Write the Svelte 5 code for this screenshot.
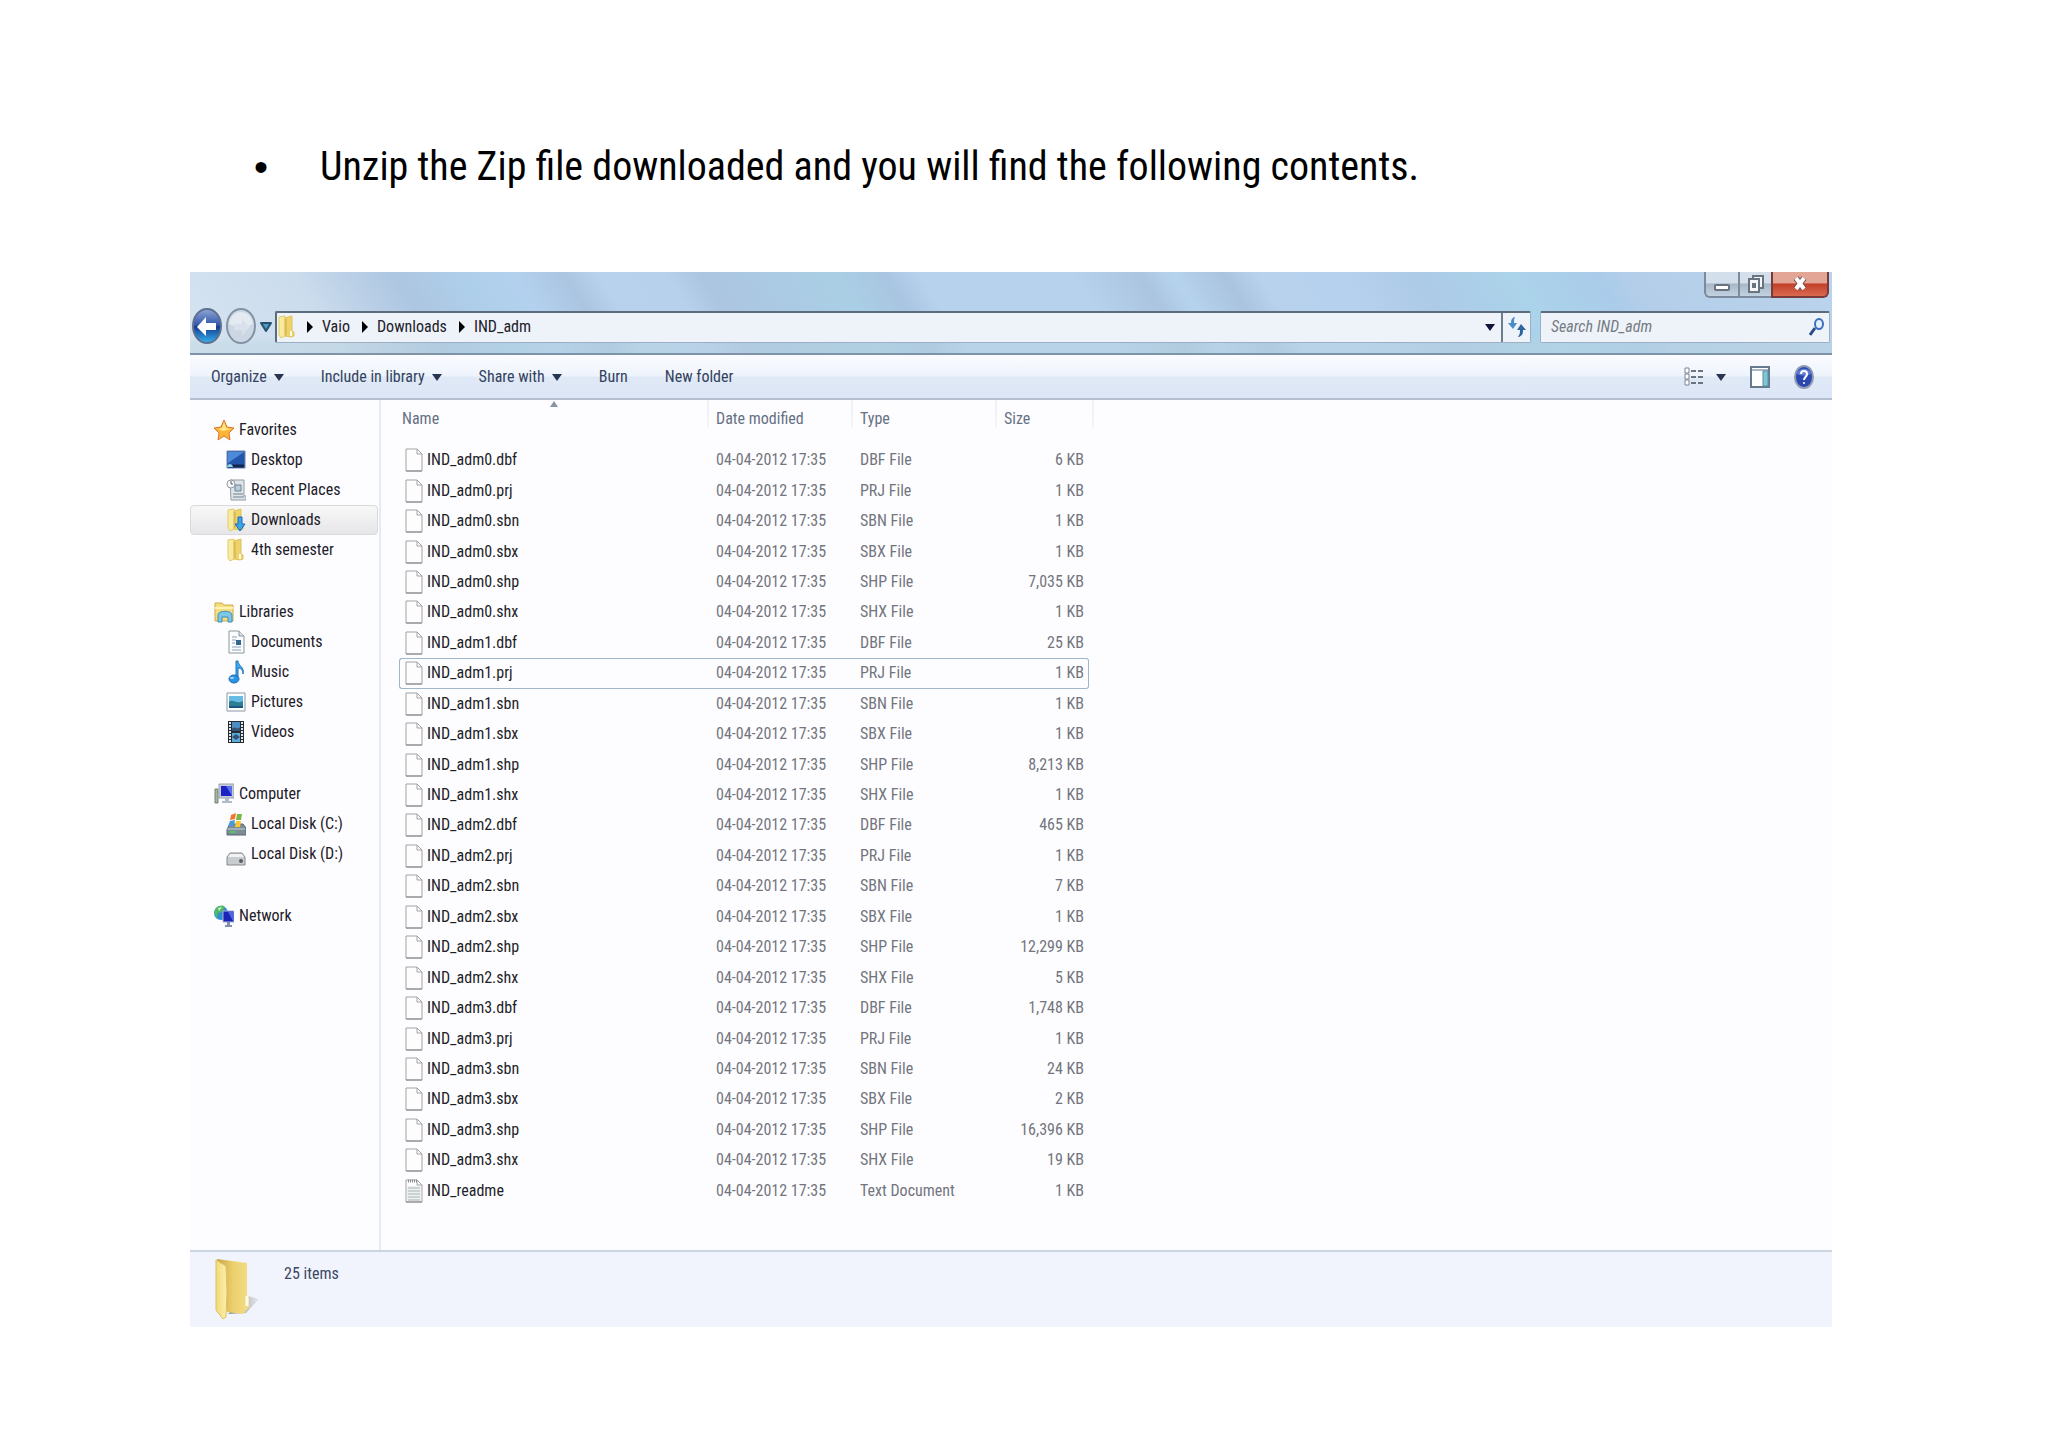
<script>
  const places = [
    {
      name: "Favorites",
      icon: "star",
      items: [
        { name: "Desktop", icon: "desktop" },
        { name: "Recent Places", icon: "recent" },
        { name: "Downloads", icon: "downloads" },
        { name: "4th semester", icon: "folder" },
      ],
    },
    {
      name: "Libraries",
      icon: "libraries",
      items: [
        { name: "Documents", icon: "document" },
        { name: "Music", icon: "music" },
        { name: "Pictures", icon: "pictures" },
        { name: "Videos", icon: "videos" },
      ],
    },
    {
      name: "Computer",
      icon: "computer",
      items: [
        { name: "Local Disk (C:)", icon: "diskc" },
        { name: "Local Disk (D:)", icon: "diskd" },
      ],
    },
    { name: "Network", icon: "network", items: [] },
  ];

  const kinds = ["dbf", "prj", "sbn", "sbx", "shp", "shx"];
  const sizes = [
    ["6", "1", "1", "1", "7,035", "1"],
    ["25", "1", "1", "1", "8,213", "1"],
    ["465", "1", "7", "1", "12,299", "5"],
    ["1,748", "1", "24", "2", "16,396", "19"],
  ];

  const files = sizes.flatMap((row, i) =>
    row.map((size, k) => ({
      name: `IND_adm${i}.${kinds[k]}`,
      type: `${kinds[k].toUpperCase()} File`,
      size,
    }))
  );
  files.push({ name: "IND_readme", type: "Text Document", size: "1", text: true });

  const path = ["Vaio", "Downloads", "IND_adm"];
  const commands = [
    { name: "Organize", menu: true },
    { name: "Include in library", menu: true },
    { name: "Share with", menu: true },
    { name: "Burn" },
    { name: "New folder" },
  ];

  let place = $state("Downloads");
  let selected = $state("IND_adm1.prj");
  let query = $state("");
</script>

{#snippet down()}
  <svg class="down" viewBox="0 0 10 8"><path d="M0 1h10L5 8z" fill="currentColor" /></svg>
{/snippet}

{#snippet folder()}
  <path d="M2 2 8 1v20l-4 2-2-3z" fill="#f8ea9e" stroke="#e2cb6c" />
  <path d="M8 3l7-2v15l2 1v4l-3 1-6-1z" fill="#eed36a" stroke="#dec25c" />
  <path d="M9 4v16" stroke="#cfae4a" />
  <path d="M14 16v5" stroke="#fffbe0" stroke-width="2" />
{/snippet}

{#snippet icon(name)}
  <svg class="icon" viewBox="0 0 20 24" fill="none">
    {#if name === "star"}
      <path d="M10 2l3 7 7 1-5 5 1 7-6-4-6 4 1-7-5-5 7-1z" fill="#fbb436" stroke="#d9772a" />
      <path d="M10 4l2 6 5 1-8 2-5-2 4-1z" fill="#ffe78c" />
    {:else if name === "desktop"}
      <path d="M1 3h18v17H1z" fill="#2356a8" stroke="#6c87b3" />
      <path d="M2 4h16L2 15z" fill="#4d8bd8" />
      <path d="M2 18h16" stroke="#16254f" stroke-width="3" />
      <path d="M1 19c1-4 5-4 6 0z" fill="#8fd5e8" />
    {:else if name === "recent"}
      <path d="M4 2h14v16h2v4H5z" fill="#dfe4e8" stroke="#929ba3" />
      <path d="M9 7h6v6H9z" fill="#b8cbd8" stroke="#71838f" />
      <path d="M7 16h10M7 19h11" stroke="#71838f" />
      <circle cx="5" cy="6" r="4" fill="#f8fafb" stroke="#8f979d" />
      <path d="M5 3v3h2" stroke="#535d66" />
    {:else if name === "downloads"}
      {@render folder()}
      <path d="M12 9h4v7h3l-5 7-5-7h3z" fill="#3ba5e6" stroke="#1a68b5" />
    {:else if name === "folder"}
      {@render folder()}
    {:else if name === "libraries"}
      <path d="M1 3h7l2 2h9v16H1z" fill="#f5dd7d" stroke="#cfae4b" />
      <path d="M1 8h18" stroke="#fff3b8" stroke-width="2" />
      <path d="M4 22v-7c0-5 14-5 14 0v7h-4v-5H8v5z" fill="#7cc6e6" stroke="#3f8fbd" />
    {:else if name === "document"}
      <path d="M3 1h10l5 5v17H3z" fill="#fbfcfd" stroke="#8d979f" />
      <path d="M13 1v5h5" fill="#dbe1e6" stroke="#8d979f" />
      <path d="M6 7h5M6 10h4M6 13h3M6 17h9M6 20h9" stroke="#8ba3ba" />
      <path d="M10 10h5v5h-5z" fill="#33668f" />
    {:else if name === "music"}
      <path d="M10 17V1h2c0 5 7 6 5 13 0-4-2-6-5-6v10" fill="#3fa6ea" stroke="#2177bd" />
      <ellipse cx="8" cy="19" rx="5" ry="4" fill="#2c92e0" stroke="#1a69b3" />
      <ellipse cx="6" cy="18" rx="2" ry="1" fill="#a5dbf8" />
    {:else if name === "pictures"}
      <path d="M1 3h18v18H1z" fill="#fdfefe" stroke="#8a98a3" />
      <path d="M3 6h14v12H3z" fill="#68bbe5" />
      <path d="M3 12c4-4 7 3 14-1v7H3z" fill="#2d7e93" />
      <path d="M3 16h14v2H3z" fill="#1d5682" />
    {:else if name === "videos"}
      <path d="M2 1h16v22H2z" fill="#252b33" />
      <path d="M6 2h8v9H6z" fill="#4a8ec8" />
      <path d="M6 13h8v9H6z" fill="#5aaadc" />
      <path d="M6 9c3-4 5 2 8-2v4H6zM6 17l4-3 4 3-4 3z" fill="#385272" />
      <path d="M4 2v20M16 2v20" stroke="#e2e7ec" stroke-width="2" stroke-dasharray="2 1" />
    {:else if name === "computer"}
      <path d="M1 7h3v14H1z" fill="#a4b3a2" stroke="#748374" />
      <path d="M5 2h15v14H5z" fill="#c6cbd8" stroke="#9aa2b2" />
      <path d="M7 4h11v10H7z" fill="#1d22c4" />
      <path d="M12 4h6v10z" fill="#5a70e8" />
      <path d="M11 16h4v3h3v2H8v-2h3z" fill="#b3bac6" />
    {:else if name === "diskc"}
      <path d="M4 12h13l3 4v7H1v-6z" fill="#7d8d95" stroke="#59676f" />
      <path d="M1 17h18" stroke="#c5d2d8" />
      <path d="M4 20h6" stroke="#55c36a" stroke-width="2" />
      <path d="M5 3l5-2-1 6-5 1z" fill="#f0762f" />
      <path d="M11 2l5 0-1 6-5 0z" fill="#7cb944" />
      <path d="M4 9l5-1-1 6-6 0z" fill="#4a9adb" />
      <path d="M10 9h5l-1 6H9z" fill="#fbc735" />
    {:else if name === "diskd"}
      <path d="M4 11h12l3 4v8H1v-8z" fill="#c9cccf" stroke="#85898d" stroke-linejoin="round" />
      <path d="M4 12h12l2 3H2z" fill="#f1f2f3" />
      <circle cx="15" cy="19" r="2" fill="#595d62" />
    {:else if name === "network"}
      <circle cx="7" cy="9" r="7" fill="#2f8fd0" />
      <path d="M2 4c3-3 7-3 9-1L8 8l-4 1-1 5C0 11 0 6 2 4z" fill="#55b865" />
      <path d="M4 4l4-1-3 4z" fill="#d4f2dc" />
      <path d="M9 7h11v11H9z" fill="#1c24b8" stroke="#a6b4d8" />
      <path d="M14 8h5v9z" fill="#5067e0" />
      <path d="M13 18h3v3h2v2h-7v-2h2z" fill="#8790ab" />
    {/if}
  </svg>
{/snippet}

<main>
  <ul class="note">
    <li>Unzip the Zip file downloaded and you will find the following contents.</li>
  </ul>

  <section class="window">
    <header>
      <div class="caption">
        <button aria-label="Minimize">
          <svg width="16" height="18" viewBox="0 0 16 18">
            <rect x="1" y="10" width="14" height="5" rx="1" fill="#fff" stroke="#6a7480" stroke-width="2" />
          </svg>
        </button>
        <button aria-label="Restore">
          <svg width="16" height="18" viewBox="0 0 16 18" fill="#f4f6f8" stroke="#6a7480" stroke-width="2">
            <path d="M5 1h10v12H5z" />
            <path d="M1 4h10v13H1z" />
            <path d="M5 9h2v3H5z" />
          </svg>
        </button>
        <button class="close" aria-label="Close">
          <svg width="16" height="18" viewBox="0 0 16 18" fill="none">
            <path d="M4 3l8 11M12 3L4 14" stroke="#7b4a4a" stroke-width="6" />
            <path d="M4 3l8 11M12 3L4 14" stroke="#fff" stroke-width="4" />
          </svg>
        </button>
      </div>

      <div class="nav">
        <div class="history">
          <button class="back" aria-label="Back">
            <svg width="30" height="37" viewBox="0 0 30 37">
              <defs>
                <linearGradient id="orb" x2="0" y2="1">
                  <stop offset="0" stop-color="#8fa6d6" />
                  <stop offset=".48" stop-color="#3156ac" />
                  <stop offset=".52" stop-color="#123a92" />
                  <stop offset="1" stop-color="#38b4ef" />
                </linearGradient>
              </defs>
              <ellipse cx="15" cy="18" rx="14" ry="17" fill="url(#orb)" stroke="#60708e" stroke-width="2" />
              <path d="M5 19l9-10v6h10v7H14v6z" fill="#fff" />
            </svg>
          </button>
          <button class="forward" aria-label="Forward">
            <svg width="30" height="37" viewBox="0 0 30 37">
              <ellipse cx="15" cy="18" rx="14" ry="17" fill="#ccd7e4" stroke="#8492a4" stroke-width="2" />
              <path d="M3 16c2-16 22-16 24 0-8 4-16 4-24 0z" fill="#e3eaf2" />
              <path d="M24 19l-8-8v5H8v6h8v5z" fill="#d9e2ec" />
            </svg>
          </button>
          <button class="recent" aria-label="Recent pages">
            <svg width="12" height="10" viewBox="0 0 12 10">
              <path d="M1 1h10L6 9z" fill="#4d9ac4" stroke="#27506f" stroke-width="2" stroke-linejoin="round" />
            </svg>
          </button>
        </div>

        <div class="address">
          {@render icon("folder")}
          {#each path as part}
            <svg class="right" viewBox="0 0 6 12"><path d="M0 0l6 6-6 6z" /></svg>
            <button>{part}</button>
          {/each}
          <button class="previous" aria-label="Previous locations">{@render down()}</button>
          <button class="refresh" aria-label="Refresh">
            <svg width="18" height="20" viewBox="0 0 18 20">
              <path d="M6 0C3 2 3 4 3 6H0l5 6 4-6H6c0-3 0-4 1-6z" fill="#4a8cc9" />
              <path d="M11 20c4-2 4-4 4-7h3l-5-6-4 6h3c0 3 0 4-2 7z" fill="#2f659f" />
            </svg>
          </button>
        </div>

        <label class="search">
          <input type="text" placeholder="Search IND_adm" aria-label="Search IND_adm" bind:value={query} />
          <svg width="16" height="20" viewBox="0 0 16 20" fill="none">
            <path d="M1 18l5-7" stroke="#2a4a86" stroke-width="3" />
            <ellipse cx="10" cy="7" rx="4" ry="5" fill="#e6f0fb" stroke="#3c6fc0" stroke-width="2" />
          </svg>
        </label>
      </div>
    </header>

    <div class="toolbar">
      {#each commands as c}
        <button>{c.name}{#if c.menu}{@render down()}{/if}</button>
      {/each}
      <div class="views">
        <button class="view" aria-label="Change your view">
          <svg width="20" height="20" viewBox="0 0 20 20" fill="#fff" stroke="#7b8592">
            <path d="M1 1h4v5H1zM1 7h4v5H1zM1 13h4v5H1z" />
            <path d="M7 4h5M14 4h5M7 10h5M14 10h5M7 16h5M14 16h5" stroke="#6b7582" stroke-width="2" />
          </svg>
          {@render down()}
        </button>
        <button aria-label="Show the preview pane">
          <svg width="20" height="22" viewBox="0 0 20 22">
            <path d="M1 1h18v20H1z" fill="#fff" stroke="#67798d" stroke-width="2" />
            <path d="M2 4h16" stroke="#a9b8c9" stroke-width="2" />
            <path d="M13 5h5v15h-5z" fill="#7cc7d6" stroke="#5b8fa3" />
          </svg>
        </button>
        <button aria-label="Get help">
          <svg width="20" height="24" viewBox="0 0 20 24">
            <ellipse cx="10" cy="12" rx="9" ry="11" fill="#2a48b0" stroke="#8f9bb0" stroke-width="2" />
            <path d="M3 9c1-7 13-7 14 0-5 2-9 2-14 0z" fill="#5f7dd4" />
            <path d="M7 9c0-4 6-4 6 0 0 3-3 3-3 6" fill="none" stroke="#fff" stroke-width="2" />
            <circle cx="10" cy="18" r="1" fill="#fff" />
          </svg>
        </button>
      </div>
    </div>

    <div class="body">
      <nav>
        {#each places as group}
          <div class="group">
            <a href="#{group.name}">{@render icon(group.icon)}{group.name}</a>
            {#each group.items as item}
              <a
                href="#{item.name}"
                class="child"
                class:current={item.name === place}
                onclick={() => (place = item.name)}>{@render icon(item.icon)}{item.name}</a
              >
            {/each}
          </div>
        {/each}
      </nav>

      <div class="files">
        <table>
          <colgroup>
            <col class="c-name" />
            <col class="c-date" />
            <col class="c-type" />
            <col class="c-size" />
            <col class="c-end" />
          </colgroup>
          <thead>
            <tr>
              <th aria-sort="ascending">
                Name
                <svg class="sort" viewBox="0 0 8 6"><path d="M0 6l4-6 4 6z" fill="#8995a5" /></svg>
              </th>
              <th>Date modified</th>
              <th>Type</th>
              <th colspan="2">Size</th>
            </tr>
          </thead>
          <tbody>
            {#each files as file}
              <tr class:selected={file.name === selected} onclick={() => (selected = file.name)}>
                <td class="name">
                  <div>
                    <svg width="18" height="24" viewBox="0 0 18 24" fill="none">
                      <path d="M1 1h11l5 5v17H1z" fill="#fdfdfd" stroke="#a3a3a6" />
                      <path d="M12 1v5h5" stroke="#a3a3a6" />
                      <path d="M1 23h16" stroke="#85858a" />
                      {#if file.text}
                        <path d="M2 7h14v15H2z" fill="#eef1f1" />
                        <path d="M3 9h12M3 12h12M3 15h12M3 18h12M3 21h12" stroke="#a9b3b3" />
                        <path d="M3 2h9" stroke="#8a8f92" stroke-width="3" stroke-dasharray="1 1" />
                      {/if}
                    </svg>
                    {file.name}
                  </div>
                </td>
                <td>04-04-2012 17:35</td>
                <td>{file.type}</td>
                <td class="size">{file.size} KB</td>
                <td class="end"></td>
              </tr>
            {/each}
          </tbody>
        </table>
      </div>
    </div>

    <footer>
      <svg width="46" height="62" viewBox="0 0 46 62">
        <defs>
          <linearGradient id="flap">
            <stop offset="0" stop-color="#f2da78" />
            <stop offset="1" stop-color="#fbf0ae" />
          </linearGradient>
          <linearGradient id="inside">
            <stop offset="0" stop-color="#c9a548" />
            <stop offset=".5" stop-color="#ecd06c" />
            <stop offset="1" stop-color="#f3dd86" />
          </linearGradient>
          <linearGradient id="shade">
            <stop offset="0" stop-color="#8a8a8a" />
            <stop offset="1" stop-color="#e6e8ef" />
          </linearGradient>
        </defs>
        <path d="M14 56l20-18 11 3-13 14z" fill="url(#shade)" />
        <path d="M3 1l30 4v33l2 2v9l-6 7-16-2z" fill="url(#inside)" />
        <path d="M2 2l10 6 1 26-1 25-3 2-7-9z" fill="url(#flap)" stroke="#dcc066" />
        <path d="M33 38v10" stroke="#fffbe6" stroke-width="3" />
      </svg>
      <span>{files.length} items</span>
    </footer>
  </section>
</main>

<style>
  :global(body) {
    margin: 0;
    background: #fff;
  }
  main {
    padding: 136px 216px 120px 190px;
    font: 16px/24px "Roboto Condensed", "Open Sans", sans-serif;
    color: #1d2029;
  }
  button {
    display: flex;
    align-items: center;
    padding: 0;
    border: 0;
    background: none;
    font: inherit;
    color: inherit;
  }
  svg {
    flex: none;
  }
  .note {
    margin: 0 0 74px 64px;
    padding: 0;
    list-style: none;
    font-size: 40px;
    line-height: 62px;
    color: #000;
  }
  .note li {
    display: flex;
  }
  .note li::before {
    content: "•";
    width: 66px;
    font-family: "Liberation Sans", sans-serif;
  }

  header {
    border-bottom: 2px solid #7f93a8;
    background:
      linear-gradient(to bottom, transparent 80%, #b9d3dd66 90%),
      linear-gradient(
        58deg,
        #d6e4f1 0%,
        #cbdced 9%,
        #adc6e1 15%,
        #aecfea 19%,
        #b3d1ee 22%,
        #abc5e1 25%,
        #b8d2ed 27%,
        #b7d0ec 31%,
        #acc5e1 33%,
        #aacfe5 41%,
        #a9c5e1 44%,
        #b7d2ed 46%,
        #b7d2ed 55%,
        #abc5e0 59%,
        #b6d3ed 61%,
        #b2cde8 62%,
        #aac4e0 64%,
        #b8d2ee 66%,
        #b6d1ed 71%,
        #adcae6 75%,
        #abd3ea 81%,
        #aaccea 86%,
        #b4cee9 88%,
        #bbd3ec 100%
      );
  }
  .caption {
    display: flex;
    justify-content: flex-end;
    padding-right: 3px;
  }
  .caption button {
    justify-content: center;
    width: 33px;
    height: 26px;
    border: solid #7b8a9c;
    border-width: 0 0 2px 2px;
    background: linear-gradient(#d3dfeb 45%, #a9b8c7 50%, #c3d2e0);
  }
  .caption button:first-child {
    width: 34px;
    border-radius: 0 0 0 6px;
  }
  .caption .close {
    width: 58px;
    border: solid #7b3a3a;
    border-width: 0 2px 2px 2px;
    border-radius: 0 0 6px 0;
    background: linear-gradient(#e3a596 45%, #c3402a 50%, #d9694f);
  }
  .nav {
    display: flex;
    align-items: center;
    height: 37px;
    padding: 10px 2px 8px;
  }
  .history {
    display: flex;
    align-items: center;
    gap: 4px;
    width: 83px;
  }
  .address,
  .search {
    box-sizing: border-box;
    display: flex;
    align-items: center;
    height: 32px;
    border: 1px solid #9db0c3;
    border-top: 2px solid #5b6b7b;
    border-radius: 2px;
    background: #eef3fa;
  }
  .address {
    flex: 1;
    margin-right: 9px;
    border-left: 2px solid #5b6b7b;
  }
  .address .icon {
    margin-right: 10px;
  }
  .right {
    width: 6px;
    height: 12px;
    margin-right: 9px;
  }
  .address button {
    margin-right: 12px;
  }
  .address .previous {
    margin: 0 6px 0 auto;
    color: #10143a;
  }
  .address .refresh {
    justify-content: center;
    width: 29px;
    height: 100%;
    margin: 0;
    border-left: 2px solid #6d7d8e;
  }
  .search {
    width: 290px;
    padding: 0 4px 0 10px;
  }
  .search input {
    flex: 1;
    min-width: 0;
    padding: 0;
    border: 0;
    outline: 0;
    background: none;
    font: italic 16px/24px "Roboto Condensed", "Open Sans", sans-serif;
  }
  .search input::placeholder {
    color: #767b82;
    opacity: 1;
  }
  .down {
    width: 10px;
    height: 8px;
  }

  .toolbar {
    display: flex;
    align-items: center;
    height: 43px;
    padding: 0 18px 0 21px;
    border-bottom: 2px solid #b3bfd0;
    background: linear-gradient(#fbfcff, #eef3fc 48%, #dfe9f6 52%, #dce6f7);
    color: #33425c;
  }
  .toolbar button {
    gap: 7px;
    margin-right: 37px;
  }
  .toolbar .down {
    color: #26364f;
  }
  .views {
    display: flex;
    margin-left: auto;
  }
  .views button {
    margin-right: 24px;
  }
  .views .view {
    gap: 12px;
  }
  .views button:last-child {
    margin-right: 0;
  }

  .body {
    display: flex;
    background: #fdfdff;
  }
  nav {
    display: flex;
    flex-direction: column;
    gap: 32px;
    box-sizing: border-box;
    width: 191px;
    padding-top: 15px;
    border-right: 2px solid #e4ebf4;
  }
  nav a {
    display: flex;
    align-items: center;
    gap: 5px;
    box-sizing: border-box;
    height: 30px;
    margin-right: 1px;
    padding-left: 23px;
    border: 1px solid transparent;
    color: inherit;
    text-decoration: none;
  }
  nav .child {
    padding-left: 35px;
  }
  nav .current {
    border-color: #dadade;
    border-radius: 4px;
    background: linear-gradient(#f8f8f9, #e6e6e8);
  }
  .icon {
    width: 20px;
    height: 24px;
  }

  .files {
    flex: 1;
    padding: 0 0 44px 18px;
  }
  table {
    width: 695px;
    height: 806px;
    border-spacing: 0;
    table-layout: fixed;
  }
  .c-name {
    width: 310px;
  }
  .c-date,
  .c-type {
    width: 144px;
  }
  .c-size {
    width: 92px;
  }
  .c-end {
    width: 5px;
  }
  th {
    position: relative;
    height: 27px;
    padding: 5px 0 13px 7px;
    text-align: left;
    font-weight: 400;
    color: #667084;
    background: linear-gradient(#eef3f8, #f1f4f9) right top / 2px 28px no-repeat;
  }
  th:first-child {
    padding-left: 3px;
  }
  .sort {
    position: absolute;
    top: 1px;
    left: 50%;
    width: 8px;
    height: 6px;
    transform: translateX(-50%);
  }
  td {
    padding: 0 0 0 7px;
    border: 1px solid transparent;
    border-width: 1px 0;
    color: #73757e;
  }
  .name {
    padding-left: 5px;
    border-left-width: 1px;
    color: #1d1f28;
  }
  .name div {
    display: flex;
    align-items: center;
    gap: 4px;
  }
  .size {
    padding-right: 4px;
    border-right-width: 1px;
    text-align: right;
  }
  .selected td:not(.end) {
    border-color: #9fb6cb;
  }
  .selected .name {
    border-radius: 3px 0 0 3px;
  }
  .selected .size {
    border-radius: 0 3px 3px 0;
  }

  footer {
    display: flex;
    gap: 24px;
    height: 69px;
    padding: 6px 24px 0;
    border-top: 2px solid #cbd5e0;
    background: #f1f4fd;
    color: #3b4763;
  }
  footer span {
    padding-top: 4px;
  }
</style>
